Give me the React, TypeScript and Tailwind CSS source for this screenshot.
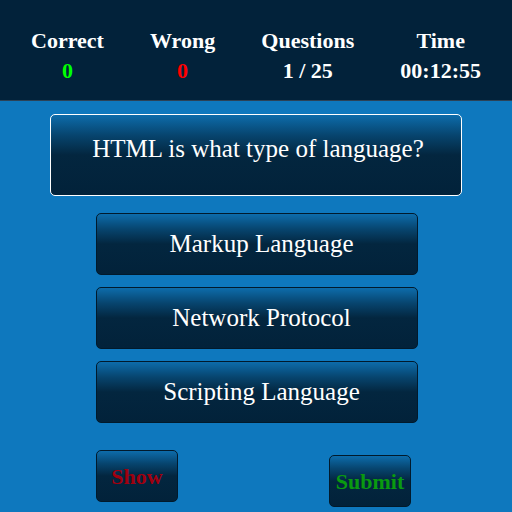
import React from "react";

const stats = [
  { label: "Correct", value: "0", color: "text-[#00ff00]" },
  { label: "Wrong", value: "0", color: "text-[#ff0000]" },
  { label: "Questions", value: "1 / 25", color: "text-white" },
  { label: "Time", value: "00:12:55", color: "text-white" },
];

const options = ["Markup Language", "Network Protocol", "Scripting Language"];

const panel =
  "bg-[linear-gradient(to_bottom,#0d6cab_0%,#07456f_25%,#03263f_50%,#02223a_100%)]";

export default function App() {
  return (
    <div className="w-[512px] h-[512px] bg-[#0e78be] overflow-hidden font-['Liberation_Serif','Times_New_Roman',serif]">
      <header className="h-[101px] bg-[#02223a] border-b border-[#2b4257] flex justify-between px-[31px] pt-[26px]">
        {stats.map((s) => (
          <div key={s.label} className="flex flex-col items-center font-bold text-[22px] leading-[30px]">
            <span className="text-white">{s.label}</span>
            <span className={s.color}>{s.value}</span>
          </div>
        ))}
      </header>

      <div className="flex flex-col items-center">
        <div
          className={`mt-[13px] w-[412px] h-[82px] rounded-[5px] border border-white flex items-center justify-center text-white text-[25px] pl-[4px] pb-[13px] ${panel}`}
        >
          HTML is what type of language?
        </div>

        <div className="mt-[17px] flex flex-col gap-[12px] pl-[1px]">
          {options.map((o) => (
            <button
              key={o}
              className={`w-[322px] h-[62px] rounded-[5px] border border-[#011a2c] flex items-center justify-center text-white text-[25px] pl-[10px] font-['Liberation_Serif','Times_New_Roman',serif] ${panel}`}
            >
              {o}
            </button>
          ))}
        </div>

        <div className="w-full flex items-start mt-[27px]">
          <button
            className={`ml-[96px] w-[82px] h-[52px] rounded-[5px] border border-[#011a2c] flex items-center justify-center font-bold text-[22px] text-[#a0000f] font-['Liberation_Serif','Times_New_Roman',serif] ${panel}`}
          >
            Show
          </button>
          <button
            className={`ml-[151px] mt-[5px] w-[82px] h-[52px] rounded-[5px] border border-[#011a2c] flex items-center justify-center font-bold text-[22px] text-[#0a9a10] font-['Liberation_Serif','Times_New_Roman',serif] ${panel}`}
          >
            Submit
          </button>
        </div>
      </div>
    </div>
  );
}
